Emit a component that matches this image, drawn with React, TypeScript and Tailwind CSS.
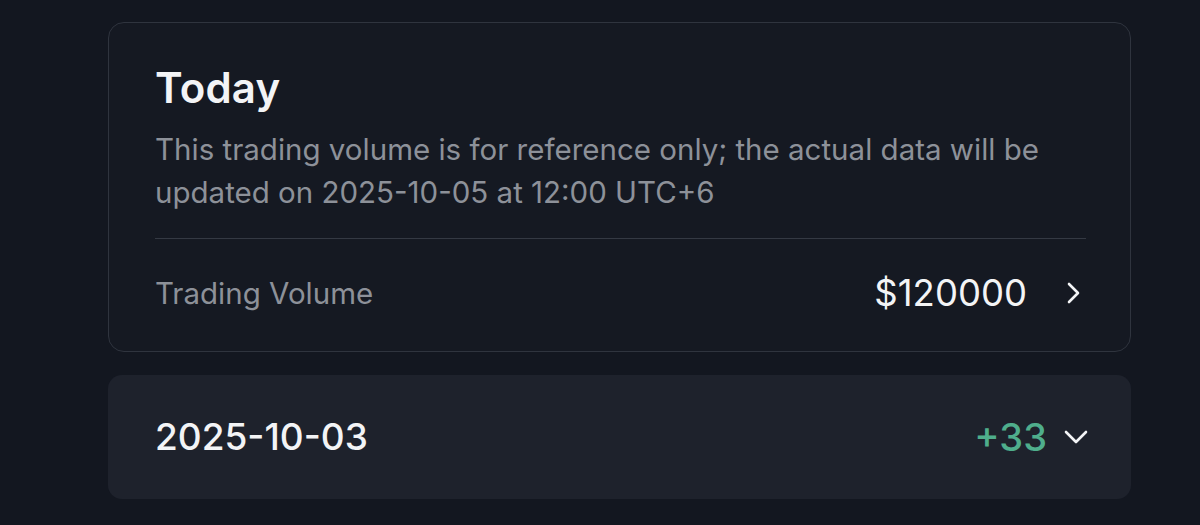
import React from "react";

export default function App() {
  return (
    <div
      className="w-[1200px] h-[525px] bg-[#131720] overflow-hidden"
      style={{ fontFamily: "Inter, 'Noto Sans', sans-serif" }}
    >
      <div className="pl-[108px] pr-[69px] pt-[22px] flex flex-col gap-[23px]">
        <div className="border border-[#2f343e] rounded-[16px] bg-[#151922] pl-[46px] pr-[44px] pt-[40px] pb-[36px]">
          <div className="text-[42px] leading-[50px] font-semibold text-[#f3f4f6] tracking-[0.2px]">Today</div>
          <div className="mt-[15px] text-[29.5px] leading-[43px] text-[#8d9199]">
            This trading volume is for reference only; the actual data will be updated on 2025-10-05 at 12:00 UTC+6
          </div>
          <div className="mt-[24px] h-px bg-[#343943]" />
          <div className="mt-[32px] h-[44px] flex items-center justify-between">
            <div className="text-[29.5px] text-[#8d9199]">Trading Volume</div>
            <div className="flex items-center gap-[36px]">
              <div className="text-[36.5px] text-[#f3f4f6] font-normal">$120000</div>
              <svg width="20" height="24" viewBox="0 0 20 24" fill="none" className="mr-[3px]">
                <path d="M6 3 L15 12 L6 21" stroke="#f3f4f6" strokeWidth="2.6" strokeLinecap="round" strokeLinejoin="round" />
              </svg>
            </div>
          </div>
        </div>
        <div className="rounded-[14px] bg-[#1e222c] h-[124px] pl-[47px] pr-[42px] flex items-center justify-between">
          <div className="text-[37px] text-[#f3f4f6] font-medium">2025-10-03</div>
          <div className="flex items-center gap-[16px]">
            <div className="text-[38px] text-[#4fae8c] font-medium">+33</div>
            <svg width="26" height="18" viewBox="0 0 26 18" fill="none">
              <path d="M3 4 L13 14 L23 4" stroke="#f3f4f6" strokeWidth="2.6" strokeLinecap="round" strokeLinejoin="round" />
            </svg>
          </div>
        </div>
      </div>
    </div>
  );
}
